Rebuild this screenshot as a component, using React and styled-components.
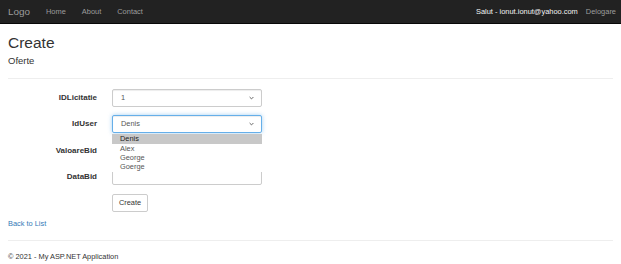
import React from 'react';
import styled, { createGlobalStyle } from 'styled-components';

const GlobalStyle = createGlobalStyle`
  html, body {
    margin: 0;
    padding: 0;
    background: #fff;
  }
  body {
    font-family: "Liberation Sans", Arial, sans-serif;
    font-size: 7.4px;
    color: #333;
  }
`;

const users = ['Denis', 'Alex', 'George', 'Goerge'];

const Chevron = () => (
  <svg width="5" height="4" viewBox="0 0 5 4">
    <path d="M0.6 1 L2.5 2.9 L4.4 1" fill="none" stroke="#555" strokeWidth="0.9" />
  </svg>
);

const App = () => (
  <>
    <GlobalStyle />
    <Navbar>
      <NavLeft>
        <Brand>Logo</Brand>
        <NavLink>Home</NavLink>
        <NavLink>About</NavLink>
        <NavLink>Contact</NavLink>
      </NavLeft>
      <NavRight>
        <Greeting>Salut - ionut.ionut@yahoo.com</Greeting>
        <NavLink>Delogare</NavLink>
      </NavRight>
    </Navbar>
    <Container>
      <Title>Create</Title>
      <Subtitle>Oferte</Subtitle>
      <Rule />
      <Form>
        <FormRow>
          <Label>IDLicitatie</Label>
          <Control>
            <SelectBox>
              <span>1</span>
              <Chevron />
            </SelectBox>
          </Control>
        </FormRow>
        <FormRow>
          <Label>IdUser</Label>
          <Control>
            <SelectBox focused>
              <span>Denis</span>
              <Chevron />
            </SelectBox>
            <Dropdown>
              {users.map((u, i) => (
                <Option key={u} active={i === 0}>
                  {u}
                </Option>
              ))}
            </Dropdown>
          </Control>
        </FormRow>
        <FormRow>
          <Label>ValoareBid</Label>
          <Control>
            <Input />
          </Control>
        </FormRow>
        <FormRow>
          <Label>DataBid</Label>
          <Control>
            <Input />
          </Control>
        </FormRow>
        <FormRow>
          <Label />
          <Button>Create</Button>
        </FormRow>
      </Form>
      <BackLink>Back to List</BackLink>
      <Rule footer />
      <Footer>© 2021 - My ASP.NET Application</Footer>
    </Container>
  </>
);

const Navbar = styled.nav`
  height: 24px;
  background: #222;
  border-bottom: 1px solid #080808;
  box-sizing: border-box;
  display: flex;
  align-items: center;
  justify-content: space-between;
  padding: 0 5px 1px 8px;
`;

const NavLeft = styled.div`
  display: flex;
  align-items: center;
  gap: 16px;
`;

const NavRight = styled.div`
  display: flex;
  align-items: center;
  gap: 8px;
`;

const Brand = styled.span`
  font-size: 9.9px;
  color: #9d9d9d;
`;

const NavLink = styled.span`
  font-size: 7.45px;
  color: #9d9d9d;
`;

const Greeting = styled.span`
  font-size: 7.45px;
  color: #f2f2f2;
`;

const Container = styled.div`
  padding: 0 8px;
  display: flex;
  flex-direction: column;
`;

const Title = styled.h2`
  margin: 9.5px 0 0;
  font-size: 15.5px;
  line-height: 18px;
  font-weight: 400;
  color: #333;
`;

const Subtitle = styled.h4`
  margin: 3px 0 0;
  font-size: 9.5px;
  line-height: 11px;
  font-weight: 400;
  color: #333;
`;

const Rule = styled.div`
  height: 1px;
  background: #eee;
  margin: ${({ footer }) => (footer ? '11px 0 0' : '12px 0 10px')};
`;

const Form = styled.div`
  display: flex;
  flex-direction: column;
  gap: 8.3px;
`;

const FormRow = styled.div`
  display: flex;
  align-items: center;
`;

const Label = styled.label`
  width: 89px;
  margin-right: 15px;
  text-align: right;
  font-weight: 700;
  font-size: 8px;
  color: #333;
`;

const Control = styled.div`
  position: relative;
  width: 150px;
`;

const SelectBox = styled.div`
  height: 18px;
  box-sizing: border-box;
  border: 1px solid ${({ focused }) => (focused ? '#66afe9' : '#ccc')};
  border-radius: 2px;
  box-shadow: ${({ focused }) =>
    focused
      ? 'inset 0 1px 1px rgba(0,0,0,.075), 0 0 4px rgba(102,175,233,.6)'
      : 'inset 0 1px 1px rgba(0,0,0,.075)'};
  padding: 0 7px 0 8px;
  display: flex;
  align-items: center;
  justify-content: space-between;
  font-size: 7.4px;
  color: #555;
  background: #fff;
`;

const Input = styled.div`
  height: 18px;
  box-sizing: border-box;
  border: 1px solid #ccc;
  border-radius: 2px;
  box-shadow: inset 0 1px 1px rgba(0, 0, 0, 0.075);
  background: #fff;
`;

const Dropdown = styled.div`
  position: absolute;
  top: 19px;
  left: 0;
  width: 150px;
  background: #fff;
  z-index: 2;
  padding-bottom: 1px;
`;

const Option = styled.div`
  height: 9px;
  line-height: 9px;
  padding-left: 8px;
  font-size: 7.4px;
  color: ${({ active }) => (active ? '#222' : '#555')};
  background: ${({ active }) => (active ? '#c8c8c8' : '#fff')};
  &:first-child {
    height: 10px;
    line-height: 10px;
  }
`;

const Button = styled.div`
  width: 36px;
  height: 18px;
  box-sizing: border-box;
  border: 1px solid #ccc;
  border-radius: 2px;
  background: #fff;
  display: flex;
  align-items: center;
  justify-content: center;
  font-size: 7.4px;
  color: #333;
`;

const BackLink = styled.a`
  margin-top: 7px;
  line-height: 10px;
  font-size: 7.4px;
  color: #337ab7;
`;

const Footer = styled.p`
  margin: 11px 0 0;
  line-height: 10px;
  font-size: 7.4px;
  color: #333;
`;

export default App;
